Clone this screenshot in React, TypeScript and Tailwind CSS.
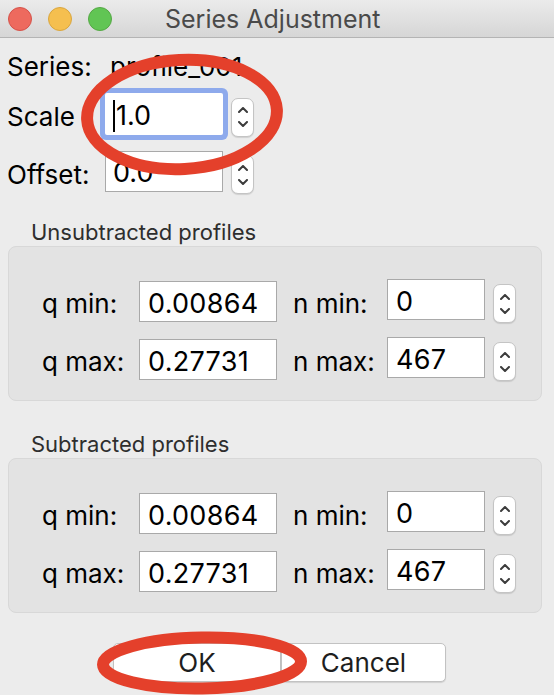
import React from "react";

const font = { fontFamily: "Inter, 'Liberation Sans', sans-serif" };

function Stepper() {
  return (
    <div className="flex h-[39px] w-[23px] flex-col items-center justify-center gap-[8px] rounded-[7px] border border-[#c4c4c4] bg-white shadow-[0_1px_1px_rgba(0,0,0,0.12)]">
      <svg width="10" height="6" viewBox="0 0 10 6" fill="none">
        <path d="M1 5 L5 1 L9 5" stroke="#3c3c3c" strokeWidth="2" strokeLinecap="round" strokeLinejoin="round" />
      </svg>
      <svg width="10" height="6" viewBox="0 0 10 6" fill="none">
        <path d="M1 1 L5 5 L9 1" stroke="#3c3c3c" strokeWidth="2" strokeLinecap="round" strokeLinejoin="round" />
      </svg>
    </div>
  );
}

type Row = { q: string; qv: string; n: string; nv: string };

function RangeGroup({ title, rows }: { title: string; rows: Row[] }) {
  return (
    <div className="flex flex-col">
      <div className="h-[28px] pl-[31px] text-[22px] leading-[28px] text-[#2e2e2e]">{title}</div>
      <div className="ml-[8px] flex h-[155px] w-[534px] flex-col gap-[14px] rounded-[8px] border border-[#d8d8d8] bg-[#e3e3e3] pt-[32px]">
        {rows.map((r) => (
          <div key={r.q} className="flex h-[44px] items-center">
            <div className="w-[130px] whitespace-nowrap pl-[33px] pt-[6px] text-[26px] leading-[32px] text-black">{r.q}</div>
            <div className="flex h-[41px] w-[138px] items-center border border-[#a9a9a9] bg-white pl-[8px] pt-[6px] text-[27px] tracking-[0.3px] text-black">
              {r.qv}
            </div>
            <div className="ml-[16px] w-[94px] whitespace-nowrap pt-[6px] text-[26px] leading-[32px] text-black">{r.n}</div>
            <div className="flex h-[41px] w-[98px] items-center self-start border border-[#a9a9a9] bg-white pl-[8px] pt-[6px] text-[27px] tracking-[0.3px] text-black">
              {r.nv}
            </div>
            <div className="ml-[8px] self-end">
              <Stepper />
            </div>
          </div>
        ))}
      </div>
    </div>
  );
}

export default function App() {
  const rows: Row[] = [
    { q: "q min:", qv: "0.00864", n: "n min:", nv: "0" },
    { q: "q max:", qv: "0.27731", n: "n max:", nv: "467" },
  ];

  return (
    <div className="relative flex h-[695px] w-[554px] flex-col overflow-hidden bg-[#ececec]" style={font}>
      {/* Title bar */}
      <div className="flex h-[38px] shrink-0 items-center border-b border-[#b4b4b4] bg-gradient-to-b from-[#ebebeb] to-[#d6d6d6]">
        <div className="ml-[8px] flex gap-[16px]">
          <span className="h-[24px] w-[24px] rounded-full border border-[#d5524a] bg-[#ed6a5e]" />
          <span className="h-[24px] w-[24px] rounded-full border border-[#d9a63f] bg-[#f5bf4f]" />
          <span className="h-[24px] w-[24px] rounded-full border border-[#55a845] bg-[#61c554]" />
        </div>
        <div className="ml-[53px] text-[25px] leading-[32px] text-[#4a4a4a]">Series Adjustment</div>
      </div>

      {/* Series */}
      <div className="mt-[13px] flex h-[32px] items-center pl-[7px] text-[26px] leading-[32px] text-black">
        <span className="w-[103px]">Series:</span>
        <span>profile_001</span>
      </div>

      {/* Scale */}
      <div className="mt-[10px] flex h-[42px] items-center pl-[7px]">
        <span className="w-[98px] pt-[6px] text-[26px] leading-[32px] text-black">Scale</span>
        <div className="flex h-[42px] w-[118px] items-center rounded-[2px] bg-white pl-[8px] pt-[4px] text-[27px] text-black shadow-[0_0_0_5px_#8eaaec]">
          <span className="mr-[1px] h-[32px] w-[2px] bg-black" />
          1.0
        </div>
        <div className="ml-[8px] mt-[6px]">
          <Stepper />
        </div>
      </div>

      {/* Offset */}
      <div className="mt-[16px] flex h-[41px] items-center pl-[7px]">
        <span className="w-[98px] pt-[6px] text-[26px] leading-[32px] text-black">Offset:</span>
        <div className="flex h-[41px] w-[118px] items-center border border-[#a9a9a9] bg-white pl-[7px] pt-[4px] text-[27px] text-black">
          0.0
        </div>
        <div className="ml-[8px] mt-[6px]">
          <Stepper />
        </div>
      </div>

      <div className="mt-[26px]">
        <RangeGroup title="Unsubtracted profiles" rows={rows} />
      </div>
      <div className="mt-[29px]">
        <RangeGroup title="Subtracted profiles" rows={rows} />
      </div>

      {/* Buttons */}
      <div className="mt-[30px] flex pl-[113px]">
        <button className="flex h-[39px] w-[168px] items-center justify-center rounded-[5px] border border-[#c2c2c2] bg-white text-[26px] text-[#1e1e1e] shadow-[0_1px_1px_rgba(0,0,0,0.12)]">
          OK
        </button>
        <button className="flex h-[39px] w-[165px] items-center justify-center rounded-[5px] border border-[#c2c2c2] bg-white text-[26px] text-[#1e1e1e] shadow-[0_1px_1px_rgba(0,0,0,0.12)]">
          Cancel
        </button>
      </div>

      {/* Red annotation ellipses */}
      <svg className="pointer-events-none absolute inset-0" width="554" height="695" viewBox="0 0 554 695" fill="none">
        <ellipse cx="182" cy="114.5" rx="95" ry="54.5" stroke="#e4402b" strokeWidth="12" transform="rotate(-3 182 114.5)" />
        <ellipse cx="202" cy="663" rx="99" ry="25.5" stroke="#e4402b" strokeWidth="12" transform="rotate(-1 202 663)" />
      </svg>
    </div>
  );
}
